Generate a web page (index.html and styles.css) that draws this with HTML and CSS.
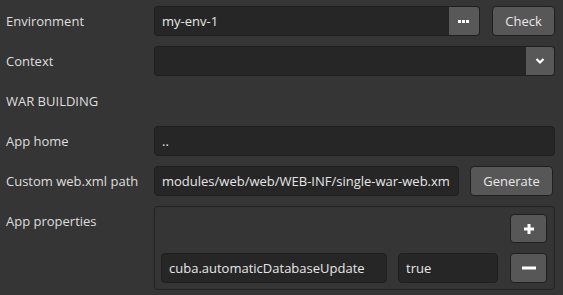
FILE: index.html
```html
<!DOCTYPE html>
<html>

<head>
  <title>Deployment settings</title>
  <link rel="stylesheet" href="styles.css">
</head>

<body>
  <div class="form">
    <div class="row">
      <div class="label">Environment</div>
      <div class="field">
        <div class="combo grow">
          <input class="input grow" type="text" value="my-env-1">
          <button class="side-btn picker">
            <svg width="12" height="4" viewBox="0 0 12 4"><rect x="0" y="1" width="3" height="3" fill="#fff"/><rect x="4" y="1" width="3" height="3" fill="#fff"/><rect x="8" y="1" width="3" height="3" fill="#fff"/></svg>
          </button>
        </div>
        <button class="btn check">Check</button>
      </div>
    </div>

    <div class="row">
      <div class="label">Context</div>
      <div class="field">
        <div class="combo grow">
          <input class="input grow" type="text" value="">
          <button class="side-btn drop">
            <svg width="10" height="8" viewBox="0 0 10 8"><path d="M1.5 2 L5 5.5 L8.5 2" stroke="#fff" stroke-width="2.2" fill="none"/></svg>
          </button>
        </div>
      </div>
    </div>

    <div class="row">
      <div class="label caption">WAR BUILDING</div>
    </div>

    <div class="row">
      <div class="label">App home</div>
      <div class="field">
        <input class="input grow" type="text" value="..">
      </div>
    </div>

    <div class="row">
      <div class="label">Custom web.xml path</div>
      <div class="field">
        <input class="input path" type="text" value="modules/web/web/WEB-INF/single-war-web.xml">
        <button class="btn generate">Generate</button>
      </div>
    </div>

    <div class="row top">
      <div class="label">App properties</div>
      <div class="panel">
        <div class="panel-head">
          <button class="btn icon-btn add">
            <svg width="12" height="12" viewBox="0 0 12 12"><path d="M6 1 V11 M1 6 H11" stroke="#fff" stroke-width="3"/></svg>
          </button>
        </div>
        <div class="prop-row">
          <input class="input key" type="text" value="cuba.automaticDatabaseUpdate">
          <input class="input value" type="text" value="true">
          <button class="btn icon-btn remove">
            <svg width="14" height="4" viewBox="0 0 14 4"><rect x="0" y="0.5" width="14" height="3" fill="#fff"/></svg>
          </button>
        </div>
      </div>
    </div>
  </div>
</body>

</html>
```

FILE: styles.css
```css
* {
  box-sizing: border-box;
  margin: 0;
  padding: 0;
}

body {
  font-family: 'Open Sans', sans-serif;
  font-size: 13px;
  background-color: #353535;
  color: #e1e1e1;
  padding: 6px 0 0 6px;
  width: 563px;
  height: 295px;
  overflow: hidden;
}

.form {
  display: flex;
  flex-direction: column;
  gap: 10px;
  width: 549px;
}

.row {
  display: flex;
  align-items: center;
  min-height: 30px;
}

.row.top {
  align-items: flex-start;
}

.label {
  width: 148px;
  flex: none;
  line-height: 30px;
  color: #dedede;
}

.caption {
  width: auto;
}

.field {
  flex: 1;
  display: flex;
  align-items: center;
  gap: 12px;
}

.grow {
  flex: 1;
  min-width: 0;
}

.input {
  height: 30px;
  background-color: #262626;
  border: 1px solid #1f1f1f;
  border-radius: 4px;
  color: #e6e6e6;
  font-family: 'Open Sans', sans-serif;
  font-size: 13px;
  padding: 0 8px 0 7px;
  outline: none;
}

.combo {
  display: flex;
  height: 30px;
}

.combo .input {
  border-top-right-radius: 0;
  border-bottom-right-radius: 0;
  border-right: none;
}

.side-btn {
  height: 30px;
  background-color: #585858;
  border: 1px solid #1f1f1f;
  border-left: none;
  border-radius: 0 4px 4px 0;
  display: flex;
  align-items: center;
  justify-content: center;
}

.picker {
  width: 31px;
}

.drop {
  width: 29px;
}

.btn {
  height: 30px;
  background-color: #575757;
  border: 1px solid #1f1f1f;
  border-radius: 4px;
  color: #e8e8e8;
  font-family: 'Open Sans', sans-serif;
  font-size: 13px;
  display: flex;
  align-items: center;
  justify-content: center;
  flex: none;
}

.check {
  width: 63px;
}

.path {
  width: 305px;
  flex: none;
}

.generate {
  width: 83px;
  margin-left: -1px;
}

.panel {
  width: 401px;
  height: 84px;
  border: 1px solid #222222;
  border-radius: 4px;
  padding: 7px 7px 6px 6px;
  display: flex;
  flex-direction: column;
  gap: 10px;
}

.panel-head {
  display: flex;
  justify-content: flex-end;
}

.icon-btn {
  width: 37px;
}

.add {
  height: 29px;
}

.prop-row {
  display: flex;
  gap: 11px;
  align-items: center;
}

.key {
  width: 226px;
}

.value {
  width: 100px;
}

.remove {
  margin-left: 1px;
}
```
